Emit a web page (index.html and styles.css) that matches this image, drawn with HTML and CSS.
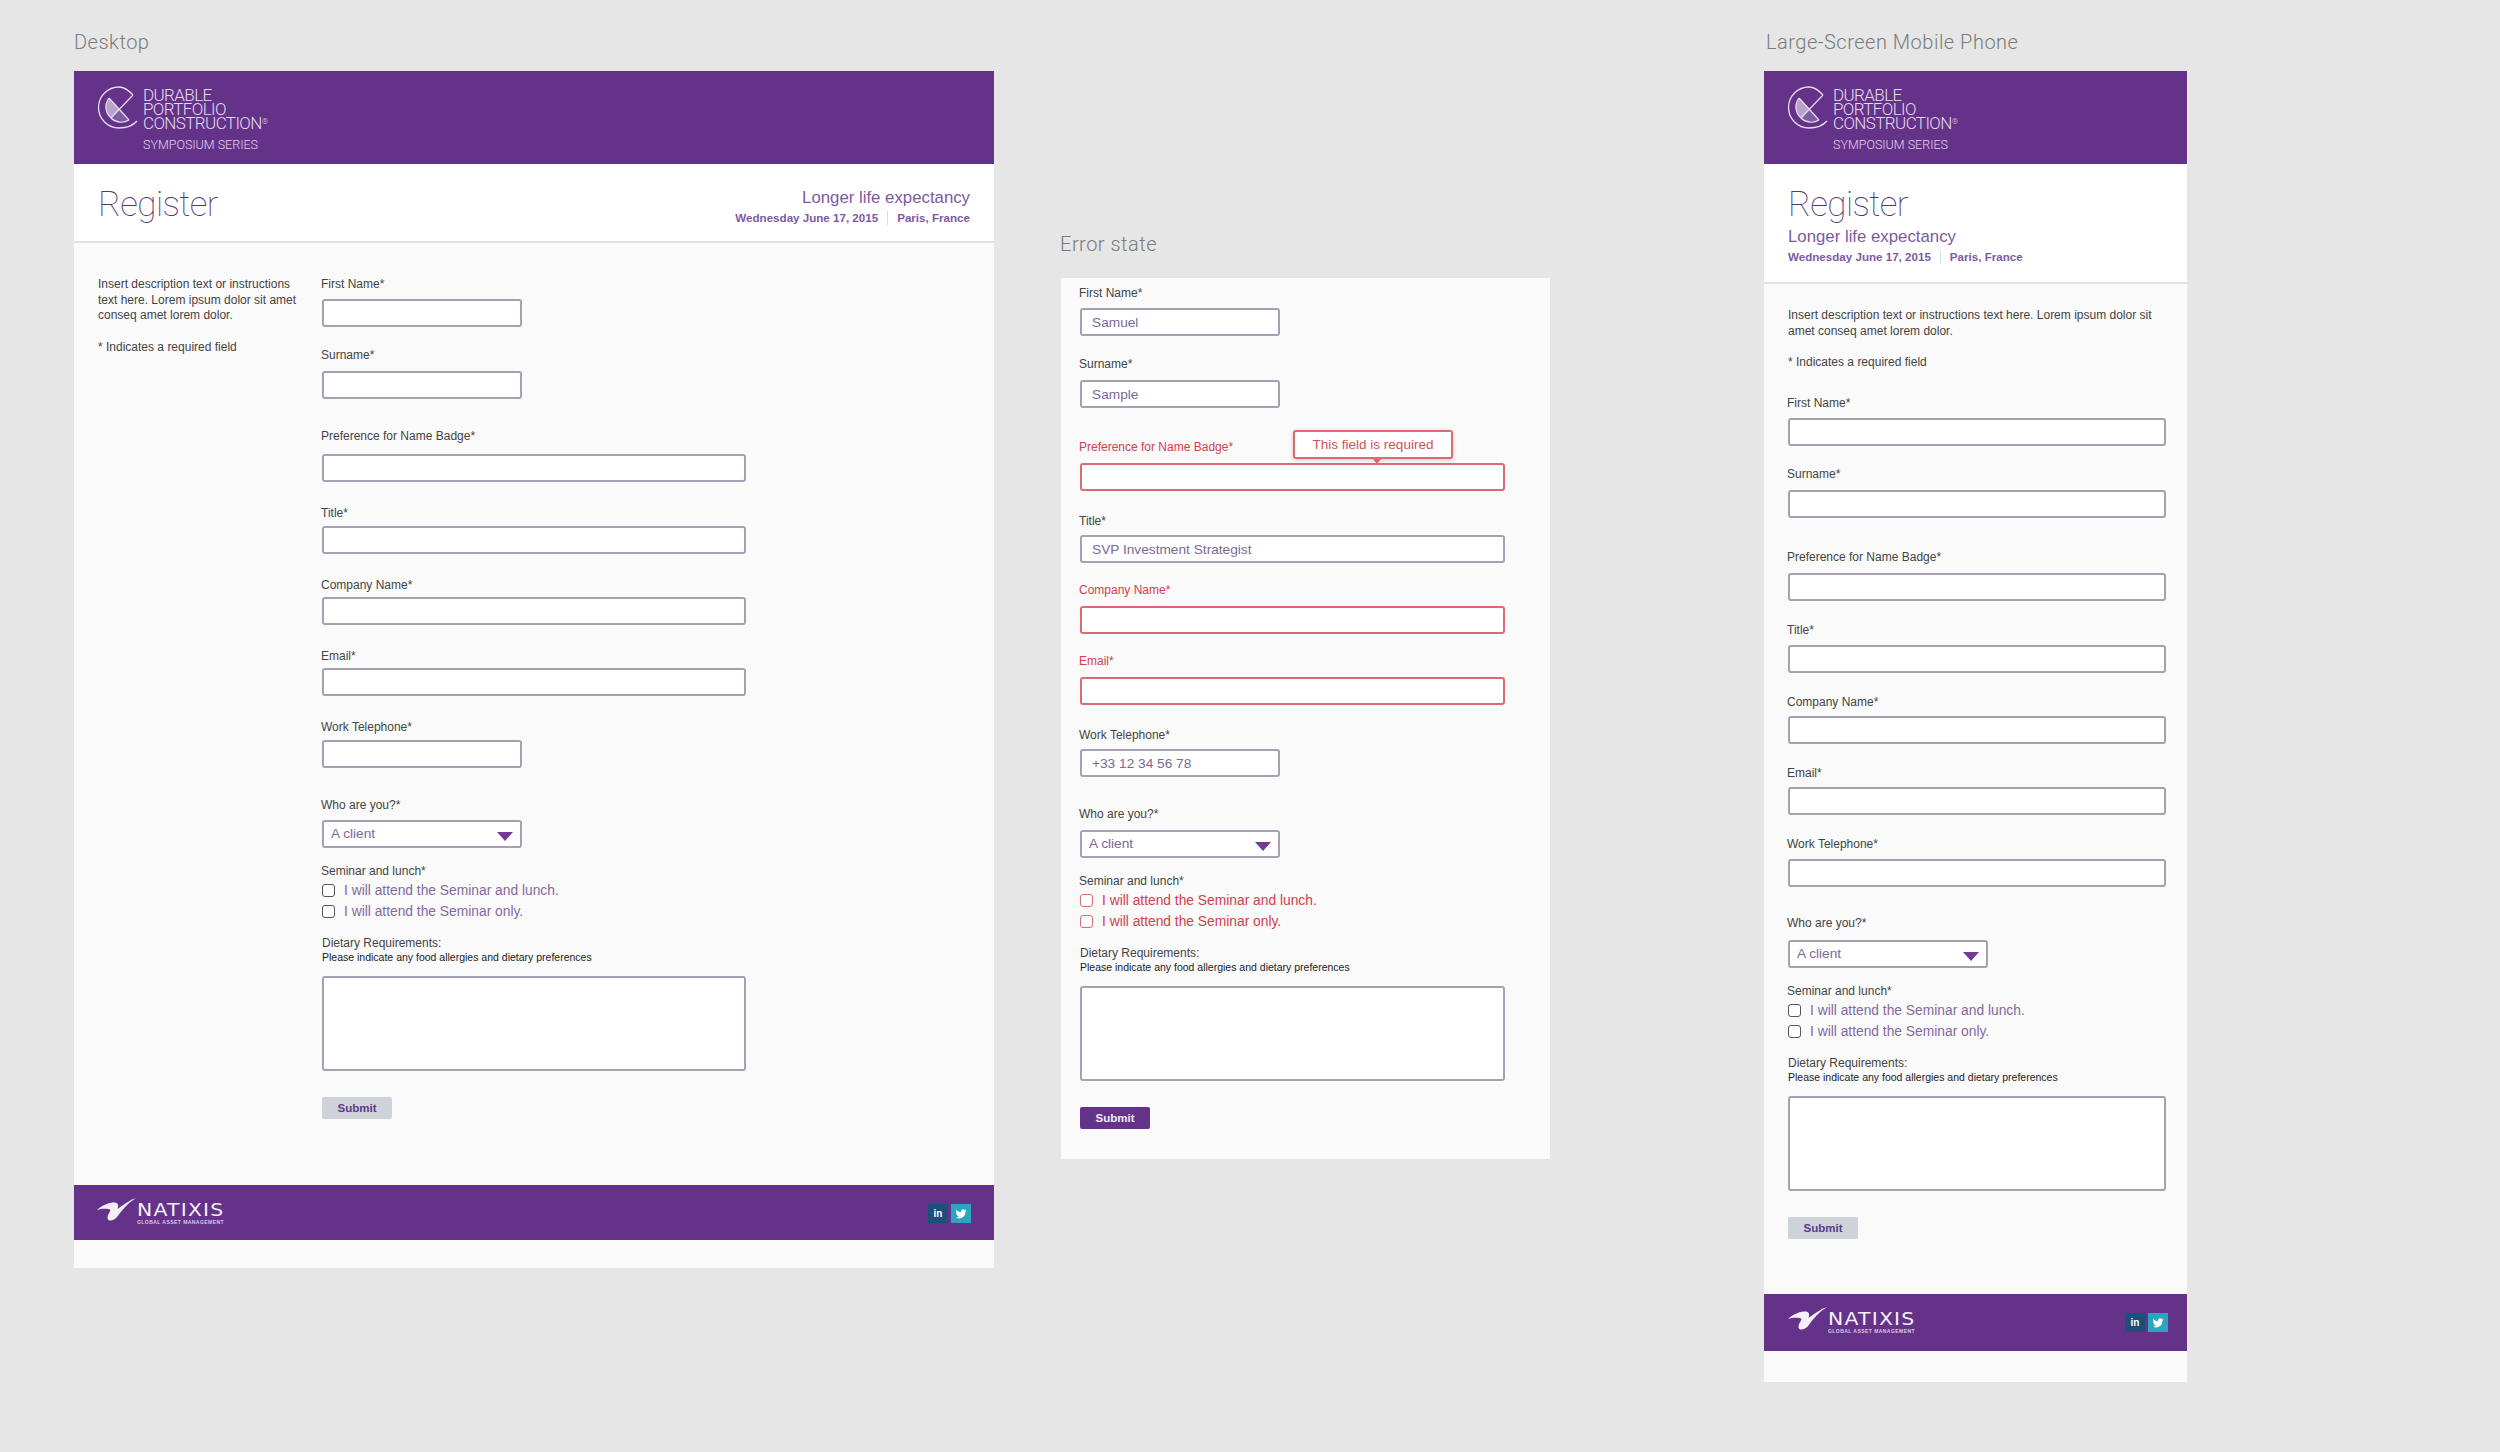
FILE: index.html
```html
<!DOCTYPE html>
<html lang="en">
<head>
    <meta charset="UTF-8">
    <meta name="viewport" content="width=device-width, initial-scale=1.0">
    <title>Register - form states</title>
    <link rel="stylesheet" href="styles.css">
</head>
<body>
    <svg class="defs" width="0" height="0" aria-hidden="true">
        <symbol id="dpc-logo" viewBox="0 0 50 52">
            <path d="M17 15 L27.5 26 L19 35 A14.5 14.5 0 0 1 17 15Z" fill="#b9a3cc"/>
            <path d="M19 35 L27.5 26 L37 37 A14.5 14.5 0 0 1 19 35Z" fill="#7f5da3"/>
            <path d="M41 12 C36 6.5 31 4 27 4 A20.5 20.5 0 0 0 27 45 C34 45 41 42.5 45 38" fill="none" stroke="#e6dcef" stroke-width="1.3"/>
            <path d="M41 12 L19 35 M17 15 L37 37 M17 15 A14.5 14.5 0 0 0 19 35 A14.5 14.5 0 0 0 37 37" fill="none" stroke="#e6dcef" stroke-width="1.2"/>
        </symbol>
        <symbol id="natixis-mark" viewBox="0 0 50 34">
            <path d="M5 17 C10 12 17 9.5 22 9.5 C26 9.5 27 12 25.5 16 C32 11 38 7 44 5 C36 10 30 17 25 24 C22 28 16 29 15.5 25 C15.3 22 18 19 18.5 17 C15 15 9 16 5 17Z" fill="#f4eff8"/>
        </symbol>
        <symbol id="twitter-bird" viewBox="0 0 24 24">
            <path d="M23 5c-.8.4-1.7.6-2.6.7.9-.6 1.6-1.4 2-2.5-.9.5-1.8.9-2.9 1.1A4.5 4.5 0 0 0 11.8 8.4C8 8.2 4.7 6.4 2.5 3.7c-1.2 2.1-.6 4.7 1.4 6-.7 0-1.4-.2-2-.6 0 2.2 1.5 4 3.6 4.5-.7.2-1.4.2-2 .1.6 1.8 2.2 3.1 4.2 3.1A9.1 9.1 0 0 1 1 18.7 12.8 12.8 0 0 0 20.8 7.3c.9-.6 1.6-1.4 2.2-2.3Z" fill="#fff"/>
        </symbol>
    </svg>

    <div class="column col-desktop">
        <h2 class="caption">Desktop</h2>
        <div class="card">
            <div class="brand-bar">
                <svg class="dpc-logo"><use href="#dpc-logo"/></svg>
                <div class="brand-text">
                    <div class="brand-name">DURABLE<br>PORTFOLIO<br>CONSTRUCTION<sup>®</sup></div>
                    <div class="brand-series">SYMPOSIUM SERIES</div>
                </div>
            </div>
            <div class="title-band">
                <h1>Register</h1>
                <div class="event">
                    <div class="event-name">Longer life expectancy</div>
                    <div class="event-meta">Wednesday June 17, 2015<span class="sep"></span>Paris, France</div>
                </div>
            </div>
            <div class="card-body">
                <div class="intro">
                    <p>Insert description text or instructions text here. Lorem ipsum dolor sit amet conseq amet lorem dolor.</p>
                    <p class="required-note">* Indicates a required field</p>
                </div>
                <form class="form">
                    <div class="field field-first"><label>First Name*</label><input class="input input-short"></div>
                    <div class="field field-surname"><label>Surname*</label><input class="input input-short"></div>
                    <div class="field field-badge"><label>Preference for Name Badge*</label><input class="input"></div>
                    <div class="field"><label>Title*</label><input class="input"></div>
                    <div class="field field-snug"><label>Company Name*</label><input class="input"></div>
                    <div class="field field-snug"><label>Email*</label><input class="input"></div>
                    <div class="field"><label>Work Telephone*</label><input class="input input-short"></div>
                    <div class="field field-who">
                        <label>Who are you?*</label>
                        <div class="select"><span>A client</span></div>
                    </div>
                    <div class="field field-seminar">
                        <label>Seminar and lunch*</label>
                        <div class="check-row"><span class="check"></span>I will attend the Seminar and lunch.</div>
                        <div class="check-row"><span class="check"></span>I will attend the Seminar only.</div>
                    </div>
                    <div class="field field-dietary">
                        <div class="dietary-title">Dietary Requirements:</div>
                        <div class="dietary-hint">Please indicate any food allergies and dietary preferences</div>
                        <textarea class="input textarea"></textarea>
                    </div>
                    <button type="button" class="submit">Submit</button>
                </form>
            </div>
            <div class="footer-bar">
                <div class="natixis">
                    <svg class="natixis-mark"><use href="#natixis-mark"/></svg>
                    <div class="natixis-text">
                        <div class="natixis-name">NATIXIS</div>
                        <div class="natixis-sub">GLOBAL ASSET MANAGEMENT</div>
                    </div>
                </div>
                <div class="social">
                    <span class="social-btn linkedin">in</span>
                    <span class="social-btn twitter"><svg class="bird"><use href="#twitter-bird"/></svg></span>
                </div>
            </div>
        </div>
    </div>

    <div class="column col-error">
        <h2 class="caption">Error state</h2>
        <div class="card">
            <div class="card-body">
                <form class="form">
                    <div class="field field-first"><label>First Name*</label><input class="input input-short" value="Samuel"></div>
                    <div class="field field-surname"><label>Surname*</label><input class="input input-short" value="Sample"></div>
                    <div class="field field-badge has-error">
                        <label>Preference for Name Badge*</label><input class="input">
                        <div class="tooltip">This field is required</div>
                    </div>
                    <div class="field"><label>Title*</label><input class="input" value="SVP Investment Strategist"></div>
                    <div class="field field-snug has-error"><label>Company Name*</label><input class="input"></div>
                    <div class="field field-snug has-error"><label>Email*</label><input class="input"></div>
                    <div class="field"><label>Work Telephone*</label><input class="input input-short" value="+33 12 34 56 78"></div>
                    <div class="field field-who">
                        <label>Who are you?*</label>
                        <div class="select"><span>A client</span></div>
                    </div>
                    <div class="field field-seminar checks-error">
                        <label>Seminar and lunch*</label>
                        <div class="check-row"><span class="check"></span>I will attend the Seminar and lunch.</div>
                        <div class="check-row"><span class="check"></span>I will attend the Seminar only.</div>
                    </div>
                    <div class="field field-dietary">
                        <div class="dietary-title">Dietary Requirements:</div>
                        <div class="dietary-hint">Please indicate any food allergies and dietary preferences</div>
                        <textarea class="input textarea"></textarea>
                    </div>
                    <button type="button" class="submit submit-active">Submit</button>
                </form>
            </div>
        </div>
    </div>

    <div class="column col-mobile">
        <h2 class="caption">Large-Screen Mobile Phone</h2>
        <div class="card">
            <div class="brand-bar">
                <svg class="dpc-logo"><use href="#dpc-logo"/></svg>
                <div class="brand-text">
                    <div class="brand-name">DURABLE<br>PORTFOLIO<br>CONSTRUCTION<sup>®</sup></div>
                    <div class="brand-series">SYMPOSIUM SERIES</div>
                </div>
            </div>
            <div class="title-band">
                <h1>Register</h1>
                <div class="event">
                    <div class="event-name">Longer life expectancy</div>
                    <div class="event-meta">Wednesday June 17, 2015<span class="sep"></span>Paris, France</div>
                </div>
            </div>
            <div class="card-body">
                <div class="intro">
                    <p>Insert description text or instructions text here. Lorem ipsum dolor sit amet conseq amet lorem dolor.</p>
                    <p class="required-note">* Indicates a required field</p>
                </div>
                <form class="form">
                    <div class="field field-first"><label>First Name*</label><input class="input input-short"></div>
                    <div class="field field-surname"><label>Surname*</label><input class="input input-short"></div>
                    <div class="field field-badge"><label>Preference for Name Badge*</label><input class="input"></div>
                    <div class="field"><label>Title*</label><input class="input"></div>
                    <div class="field field-snug"><label>Company Name*</label><input class="input"></div>
                    <div class="field field-snug"><label>Email*</label><input class="input"></div>
                    <div class="field"><label>Work Telephone*</label><input class="input input-short"></div>
                    <div class="field field-who">
                        <label>Who are you?*</label>
                        <div class="select"><span>A client</span></div>
                    </div>
                    <div class="field field-seminar">
                        <label>Seminar and lunch*</label>
                        <div class="check-row"><span class="check"></span>I will attend the Seminar and lunch.</div>
                        <div class="check-row"><span class="check"></span>I will attend the Seminar only.</div>
                    </div>
                    <div class="field field-dietary">
                        <div class="dietary-title">Dietary Requirements:</div>
                        <div class="dietary-hint">Please indicate any food allergies and dietary preferences</div>
                        <textarea class="input textarea"></textarea>
                    </div>
                    <button type="button" class="submit">Submit</button>
                </form>
            </div>
            <div class="footer-bar">
                <div class="natixis">
                    <svg class="natixis-mark"><use href="#natixis-mark"/></svg>
                    <div class="natixis-text">
                        <div class="natixis-name">NATIXIS</div>
                        <div class="natixis-sub">GLOBAL ASSET MANAGEMENT</div>
                    </div>
                </div>
                <div class="social">
                    <span class="social-btn linkedin">in</span>
                    <span class="social-btn twitter"><svg class="bird"><use href="#twitter-bird"/></svg></span>
                </div>
            </div>
        </div>
    </div>
</body>
</html>
```

FILE: styles.css
```css
* {
    box-sizing: border-box;
}
body {
    font-family: 'Liberation Sans', Arial, sans-serif;
    background-color: #e6e6e6;
    margin: 0;
    padding: 27px 0 0 74px;
    display: flex;
    align-items: flex-start;
    color: #333;
    min-height: 1452px;
}
.defs {
    position: absolute;
}
.column {
    flex: none;
}
.col-desktop {
    width: 920px;
}
.col-error {
    width: 489px;
    margin-left: 67px;
    padding-top: 202px;
}
.col-mobile {
    width: 423px;
    margin-left: 214px;
}
.caption {
    margin: 0 0 14px;
    font-family: Roboto, sans-serif;
    font-weight: 300;
    font-size: 20px;
    line-height: 30px;
    letter-spacing: 0.5px;
    color: #7b7b7b;
}
.col-error .caption {
    margin-bottom: 19px;
    margin-left: -1px;
}
.col-mobile .caption {
    margin-left: 2px;
}
.card {
    background-color: #fafafa;
    padding-bottom: 28px;
}
.col-error .card {
    padding-bottom: 0;
}
.col-mobile .card {
    padding-bottom: 31px;
}

/* purple header */
.brand-bar {
    background-color: #643289;
    height: 93px;
    display: flex;
    padding: 12px 0 0 18px;
    color: #e6dcef;
}
.dpc-logo {
    width: 50px;
    height: 52px;
    flex: none;
}
.brand-text {
    margin: 5px 0 0 1px;
}
.brand-name {
    font-family: Roboto, sans-serif;
    font-weight: 300;
    font-size: 17px;
    line-height: 14px;
    letter-spacing: -0.6px;
}
.brand-name sup {
    font-size: 8px;
    line-height: 0;
    vertical-align: 5px;
}
.brand-series {
    font-family: Roboto, sans-serif;
    font-weight: 300;
    font-size: 12.5px;
    line-height: 14px;
    margin-top: 8px;
    color: #e0d5ea;
}

/* title */
.title-band {
    background-color: white;
    border-bottom: 2px solid #e2e2e2;
    display: flex;
    justify-content: space-between;
    align-items: flex-start;
    height: 79px;
    padding: 20px 24px 0;
}
h1 {
    margin: 0;
    font-family: Roboto, sans-serif;
    font-weight: 100;
    font-size: 35px;
    line-height: 42px;
    letter-spacing: -0.6px;
    color: #4f3672;
}
.event {
    text-align: right;
    margin-top: 3px;
}
.event-name {
    font-size: 16.8px;
    line-height: 22px;
    color: #7d5a9f;
}
.event-meta {
    font-size: 11.6px;
    line-height: 18px;
    font-weight: bold;
    color: #7d5a9f;
}
.sep {
    display: inline-block;
    width: 1px;
    height: 14px;
    margin: 0 9px;
    vertical-align: -3px;
    background-color: #ddd;
}

/* body */
.card-body {
    display: flex;
    padding: 34px 24px 66px;
}
.intro {
    width: 224px;
    flex: none;
    font-size: 12px;
    line-height: 15.7px;
    color: #444;
}
.intro p {
    margin: 0;
    padding-right: 20px;
}
.intro .required-note {
    margin-top: 16px;
}
.form {
    width: 424px;
}
.field {
    display: flow-root;
    position: relative;
    margin-top: 24px;
}
.field label {
    display: block;
    height: 14px;
    margin: 0 0 6px -1px;
    font-size: 12px;
    line-height: 14px;
    color: #444;
}
.input {
    display: block;
    width: 100%;
    height: 28px;
    padding: 0 10px;
    background-color: white;
    border: 2px solid #a79fb3;
    border-radius: 3px;
    outline: none;
    font-family: inherit;
    font-size: 13.7px;
    color: #7a6a96;
}
.input-short {
    width: 200px;
}
.field-first {
    margin-top: 0;
}
.field-first label {
    margin-bottom: 8px;
}
.field-surname {
    margin-top: 21px;
}
.field-surname label {
    margin-bottom: 9px;
}
.field-badge {
    margin-top: 30px;
}
.field-badge label {
    margin-bottom: 11px;
}
.field-snug label {
    margin-bottom: 5px;
}
.field-who {
    margin-top: 30px;
}
.field-who label {
    margin-bottom: 8px;
}
.select {
    position: relative;
    width: 200px;
    height: 28px;
    padding-left: 7px;
    background-color: white;
    border: 2px solid #a79fb3;
    border-radius: 3px;
    font-size: 13.7px;
    line-height: 24px;
    color: #7a6a96;
}
.select::after {
    content: "";
    position: absolute;
    right: 7px;
    top: 10px;
    border-left: 8px solid transparent;
    border-right: 8px solid transparent;
    border-top: 9px solid #743a94;
}
.field-seminar {
    margin-top: 16px;
}
.check-row {
    display: flex;
    align-items: center;
    height: 13px;
    margin-bottom: 8px;
    font-size: 13.8px;
    color: #85699f;
}
.check {
    width: 13px;
    height: 13px;
    margin-right: 9px;
    background-color: white;
    border: 1px solid #555;
    border-radius: 3px;
}
.field-dietary {
    margin-top: 10px;
}
.dietary-title {
    font-size: 12px;
    line-height: 14px;
    color: #444;
}
.dietary-hint {
    font-size: 10.5px;
    line-height: 14px;
    margin-bottom: 12px;
    color: #222;
}
.textarea {
    height: 95px;
    resize: none;
}
.submit {
    display: block;
    width: 70px;
    height: 22px;
    margin-top: 26px;
    padding: 0;
    border: none;
    border-radius: 2px;
    background-color: #cfd2d9;
    font-family: inherit;
    font-size: 11.5px;
    font-weight: bold;
    color: #5a3a8c;
}
.submit-active {
    background-color: #643289;
    color: #f2ecf7;
}

/* error state */
.has-error label,
.checks-error .check-row {
    color: #d2404d;
}
.has-error .input,
.checks-error .check {
    border-color: #dc6a73;
}
.tooltip {
    position: absolute;
    left: 213px;
    top: -8px;
    width: 160px;
    height: 29px;
    background-color: white;
    border: 2px solid #dc6a73;
    border-radius: 3px;
    box-shadow: 0 1px 4px rgba(0, 0, 0, 0.2);
    font-size: 13.5px;
    line-height: 25px;
    text-align: center;
    color: #d2505a;
}
.tooltip::after {
    content: "";
    position: absolute;
    left: 77px;
    bottom: -7px;
    border-left: 5px solid transparent;
    border-right: 5px solid transparent;
    border-top: 6px solid #dc6a73;
}
.col-error .card-body {
    padding: 8px 45px 30px 19px;
}
.col-error .form {
    width: 425px;
}
.col-error .field label {
    margin-top: -1px;
    margin-bottom: 7px;
}
.col-error .field-first label {
    margin-top: 0;
    margin-bottom: 8px;
}
.col-error .field-surname label {
    margin-top: 0;
    margin-bottom: 9px;
}
.col-error .field-badge label {
    margin-top: 2px;
    margin-bottom: 9px;
}
.col-error .field-snug label {
    margin-top: -4px;
    margin-bottom: 9px;
}
.col-error .field-who {
    margin-top: 31px;
}
.col-error .field-who label {
    margin-bottom: 9px;
}
.col-error .field-seminar label {
    margin-top: 0;
    margin-bottom: 6px;
}

/* footer */
.footer-bar {
    background-color: #643289;
    height: 55px;
    display: flex;
    justify-content: space-between;
    padding: 8px 23px 0 18px;
}
.natixis {
    display: flex;
}
.natixis-mark {
    width: 50px;
    height: 34px;
    flex: none;
}
.natixis-text {
    margin: 9px 0 0 -5px;
    color: #f4eff8;
}
.natixis-name {
    font-family: 'DejaVu Sans', sans-serif;
    font-size: 17px;
    line-height: 16px;
    letter-spacing: 1px;
    transform: scaleX(1.2);
    transform-origin: left center;
}
.natixis-sub {
    font-family: 'Liberation Sans', sans-serif;
    font-size: 5px;
    line-height: 8px;
    font-weight: bold;
    letter-spacing: 0.45px;
    color: #d8cbe3;
}
.social {
    display: flex;
    gap: 3px;
    margin-top: 11px;
}
.social-btn {
    display: flex;
    align-items: center;
    justify-content: center;
    width: 20px;
    height: 19px;
    font-size: 10px;
    font-weight: bold;
    color: white;
}
.linkedin {
    background-color: #1c5078;
}
.twitter {
    background-color: #2aa6c1;
}
.bird {
    width: 12px;
    height: 12px;
}

/* phone */
.col-mobile .title-band {
    flex-direction: column;
    justify-content: flex-start;
    height: 120px;
    padding-left: 24px;
}
.col-mobile .event {
    text-align: left;
    margin-top: 0;
}
.col-mobile .card-body {
    display: block;
    padding: 24px 21px 55px 24px;
}
.col-mobile .intro {
    width: auto;
}
.col-mobile .intro p {
    padding-right: 0;
}
.col-mobile .required-note {
    margin-top: 16px;
}
.col-mobile .form {
    width: 378px;
    margin-top: 25px;
}
.col-mobile .input-short {
    width: 100%;
}
.col-mobile .field label {
    margin-top: -2px;
    margin-bottom: 8px;
}
.col-mobile .field-first label {
    margin-top: 0;
    margin-bottom: 8px;
}
.col-mobile .field-surname label {
    margin-top: 0;
    margin-bottom: 9px;
}
.col-mobile .field-badge label {
    margin-top: 2px;
    margin-bottom: 9px;
}
.col-mobile .field-snug label {
    margin-bottom: 7px;
}
.col-mobile .field-who {
    margin-top: 31px;
}
.col-mobile .field-who label {
    margin-bottom: 10px;
}
.col-mobile .field-seminar label {
    margin-top: 0;
    margin-bottom: 6px;
}
.col-mobile .footer-bar {
    height: 57px;
    padding: 8px 19px 0 19px;
}
```
